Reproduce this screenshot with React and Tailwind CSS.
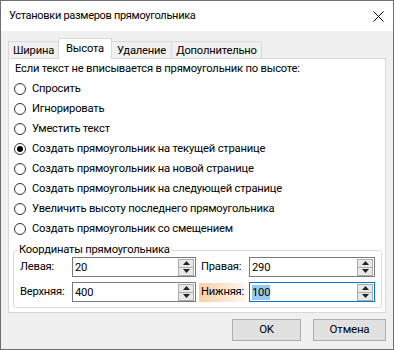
import React from 'react';

const options = [
  'Спросить',
  'Игнорировать',
  'Уместить текст',
  'Создать прямоугольник на текущей странице',
  'Создать прямоугольник на новой странице',
  'Создать прямоугольник на следующей странице',
  'Увеличить высоту последнего прямоугольника',
  'Создать прямоугольник со смещением',
];

const tabs = [
  { label: 'Ширина', w: 'w-[51px]' },
  { label: 'Высота', w: 'w-[54px]', active: true },
  { label: 'Удаление', w: 'w-[61px]' },
  { label: 'Дополнительно', w: 'w-[91px]' },
];

function Spin() {
  return (
    <div className="flex flex-col gap-0 w-[16px] mr-px">
      <div className="h-[9px] border border-[#acacac] bg-[#e8e8e8] flex items-center justify-center">
        <svg width="7" height="4" viewBox="0 0 7 4"><path d="M3.5 0 L7 4 L0 4 Z" fill="#222" /></svg>
      </div>
      <div className="h-[9px] -mt-px border border-[#acacac] bg-[#e8e8e8] flex items-center justify-center">
        <svg width="7" height="4" viewBox="0 0 7 4"><path d="M0 0 L7 0 L3.5 4 Z" fill="#222" /></svg>
      </div>
    </div>
  );
}

function NumField({ value, width, focused }) {
  return (
    <div
      className={`${width} h-[20px] border ${focused ? 'border-[#0078d7]' : 'border-[#7a7a7a]'} bg-white flex items-center justify-between pl-[2px]`}
    >
      <span className={`leading-[15px] ${focused ? 'bg-[#99c9ef]' : ''}`}>{value}</span>
      <Spin />
    </div>
  );
}

export default function App() {
  return (
    <div className="w-[394px] h-[350px] border border-[#707070] flex flex-col font-['Roboto',sans-serif] text-[11.2px] tracking-[-0.2px] text-black bg-[#f0f0f0]">
      {/* Title bar */}
      <div className="h-[30px] bg-white flex items-center justify-between pl-[8px] pr-[9px] shrink-0">
        <span className="text-[11px] tracking-[-0.3px]">Установки размеров прямоугольника</span>
        <svg width="11" height="11" viewBox="0 0 11 11">
          <path d="M0.5 0.5 L10.5 10.5 M10.5 0.5 L0.5 10.5" stroke="#000" strokeWidth="1" />
        </svg>
      </div>

      <div className="flex-1 flex flex-col px-[7px] pt-[7px]">
        {/* Tabs */}
        <div className="flex items-end h-[20px]">
          {tabs.map((t, i) => (
            <div
              key={t.label}
              className={`${t.w} ${i > 0 ? '-ml-px' : ''} border border-b-0 border-[#d9d9d9] flex justify-center ${
                t.active ? 'h-[21px] bg-white relative z-10 -mb-px pt-[2px]' : 'h-[17px] bg-[#f0f0f0] pt-[1px]'
              }`}
            >
              {t.label}
            </div>
          ))}
        </div>

        {/* Panel */}
        <div className="h-[255px] border border-[#d9d9d9] bg-white flex flex-col">
          <div className="h-[20px] flex items-center pl-[6px]">
            Если текст не вписывается в прямоугольник по высоте:
          </div>
          {options.map((o, i) => (
            <div key={o} className="h-[20px] flex items-center pl-[5px] gap-[6px]">
              <div className="w-[12px] h-[12px] rounded-full border border-[#333] bg-white flex items-center justify-center">
                {i === 3 && <div className="w-[6px] h-[6px] rounded-full bg-black" />}
              </div>
              <span>{o}</span>
            </div>
          ))}

          {/* Group box */}
          <div className="relative mt-[11px] ml-[4px] w-[369px] h-[58px] border border-[#dcdcdc] rounded-[3px] pt-[6px] flex flex-col gap-[5px]">
            <span className="absolute -top-[8px] left-[4px] px-[1px] bg-white leading-[14px]">
              Координаты прямоугольника
            </span>
            <div className="flex items-center pl-[6px]">
              <span className="w-[52px]">Левая:</span>
              <NumField value="20" width="w-[124px]" />
              <span className="ml-[3px] w-[47px] pl-[2px] h-[19px] flex items-center">Правая:</span>
              <div className="ml-[3px]">
                <NumField value="290" width="w-[126px]" />
              </div>
            </div>
            <div className="flex items-center pl-[6px]">
              <span className="w-[52px]">Верхняя:</span>
              <NumField value="400" width="w-[124px]" />
              <span className="ml-[3px] w-[47px] pl-[2px] h-[19px] flex items-center bg-linear-to-r from-[#fccfa6] to-[#fff7f0]">
                Нижняя:
              </span>
              <div className="ml-[3px]">
                <NumField value="100" width="w-[126px]" focused />
              </div>
            </div>
          </div>
        </div>

        {/* Buttons */}
        <div className="flex justify-end gap-[12px] mt-[6px]">
          <button className="w-[69px] h-[22px] border border-[#adadad] bg-[#e1e1e1] text-[11.5px]">OK</button>
          <button className="w-[73px] h-[22px] border border-[#adadad] bg-[#e1e1e1] text-[11.5px]">Отмена</button>
        </div>
      </div>
    </div>
  );
}
